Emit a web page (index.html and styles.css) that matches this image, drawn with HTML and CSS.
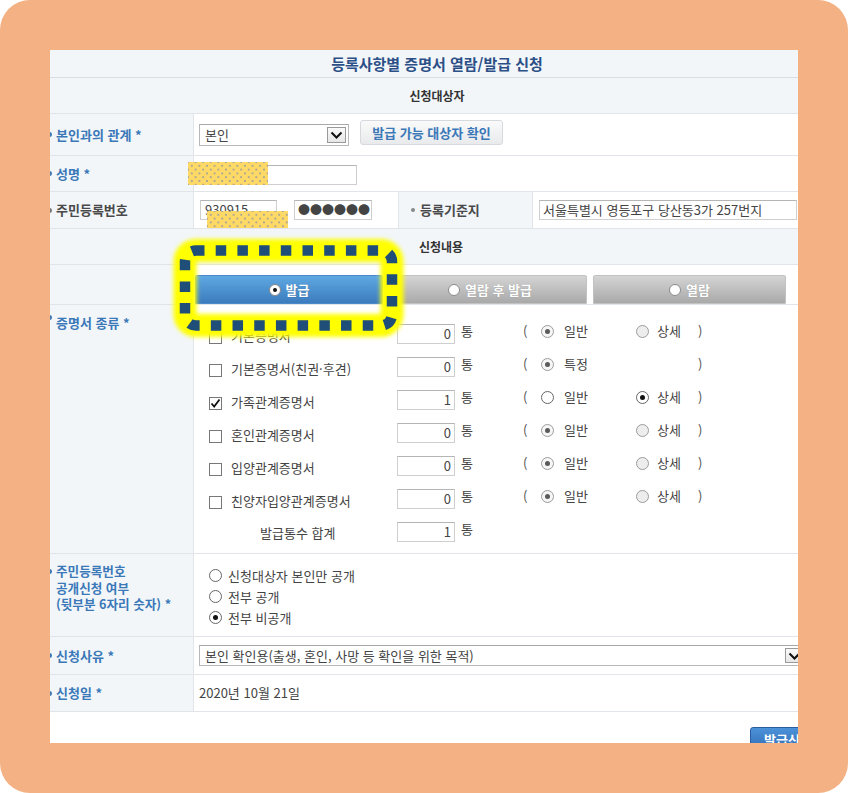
FILE: index.html
```html
<!DOCTYPE html>
<html lang="ko">
<head>
<meta charset="utf-8">
<title>등록사항별 증명서 열람/발급 신청</title>
<link rel="stylesheet" href="styles.css">
</head>
<body>
<div class="frame">
  <div class="panel">
    <div class="sheet">
      <div class="title">등록사항별 증명서 열람/발급 신청</div>
      <div class="sec">신청대상자</div>

      <div class="row r-rel">
        <div class="lab req"><i class="dot"></i>본인과의 관계 *</div>
        <div class="val">
          <div class="sel sel-rel"><span class="sel-text">본인</span><span class="sel-arrow"><svg width="17" height="14" viewBox="0 0 17 14"><polyline points="3.5,4.5 8.5,9.5 13.5,4.5" fill="none" stroke="#111" stroke-width="2"/></svg></span></div>
          <div class="btn-check">발급 가능 대상자 확인</div>
        </div>
      </div>

      <div class="row r-name">
        <div class="lab req"><i class="dot"></i>성명 *</div>
        <div class="val"><div class="inp inp-name"></div></div>
      </div>

      <div class="row r-id">
        <div class="lab plain"><i class="dot"></i>주민등록번호</div>
        <div class="val val-id">
          <div class="inp inp-id1">930915</div>
          <div class="inp inp-id2">●●●●●●</div>
        </div>
        <div class="sublab"><i class="dot sm"></i>등록기준지</div>
        <div class="val"><div class="inp inp-addr">서울특별시 영등포구 당산동3가 257번지</div></div>
      </div>

      <div class="sec sec2">신청내용</div>

      <div class="row r-tabs">
        <div class="lab"></div>
        <div class="val">
          <div class="tab on"><i class="rb on"></i>발급</div>
          <div class="tab off t2"><i class="rb"></i>열람 후 발급</div>
          <div class="tab off t3"><i class="rb"></i>열람</div>
        </div>
      </div>

      <div class="row r-certs">
        <div class="lab req top"><i class="dot"></i>증명서 종류 *</div>
        <div class="val certs">
          <div class="cline">
            <span class="cb"></span><span class="cname">기본증명서</span>
            <span class="inp num">0</span><span class="tong">통</span><span class="par">(</span>
            <i class="radio dis sel"></i><span class="opt1">일반</span>
            <i class="radio dis"></i><span class="opt2">상세</span><span class="par">)</span>
          </div>
          <div class="cline">
            <span class="cb"></span><span class="cname">기본증명서(친권·후견)</span>
            <span class="inp num">0</span><span class="tong">통</span><span class="par">(</span>
            <i class="radio dis sel"></i><span class="opt1">특정</span>
            <i class="radio-gap"></i><span class="opt2"></span><span class="par">)</span>
          </div>
          <div class="cline">
            <span class="cb chk"><svg width="11" height="11" viewBox="0 0 11 11"><polyline points="1.5,5.5 4.2,8.5 9.5,1.5" fill="none" stroke="#111" stroke-width="1.8"/></svg></span><span class="cname">가족관계증명서</span>
            <span class="inp num">1</span><span class="tong">통</span><span class="par">(</span>
            <i class="radio"></i><span class="opt1">일반</span>
            <i class="radio sel"></i><span class="opt2">상세</span><span class="par">)</span>
          </div>
          <div class="cline">
            <span class="cb"></span><span class="cname">혼인관계증명서</span>
            <span class="inp num">0</span><span class="tong">통</span><span class="par">(</span>
            <i class="radio dis sel"></i><span class="opt1">일반</span>
            <i class="radio dis"></i><span class="opt2">상세</span><span class="par">)</span>
          </div>
          <div class="cline">
            <span class="cb"></span><span class="cname">입양관계증명서</span>
            <span class="inp num">0</span><span class="tong">통</span><span class="par">(</span>
            <i class="radio dis sel"></i><span class="opt1">일반</span>
            <i class="radio dis"></i><span class="opt2">상세</span><span class="par">)</span>
          </div>
          <div class="cline">
            <span class="cb"></span><span class="cname">친양자입양관계증명서</span>
            <span class="inp num">0</span><span class="tong">통</span><span class="par">(</span>
            <i class="radio dis sel"></i><span class="opt1">일반</span>
            <i class="radio dis"></i><span class="opt2">상세</span><span class="par">)</span>
          </div>
          <div class="cline total">
            <span class="tname">발급통수 합계</span>
            <span class="inp num">1</span><span class="tong">통</span>
          </div>
        </div>
      </div>

      <div class="row r-disc">
        <div class="lab req top2"><i class="dot"></i><span class="ml"><span class="mline">주민등록번호</span><span class="mline">공개신청 여부</span><span class="mline">(뒷부분 6자리 숫자) *</span></span></div>
        <div class="val disc">
          <div class="dline"><i class="radio"></i>신청대상자 본인만 공개</div>
          <div class="dline"><i class="radio"></i>전부 공개</div>
          <div class="dline"><i class="radio sel"></i>전부 비공개</div>
        </div>
      </div>

      <div class="row r-reason">
        <div class="lab req"><i class="dot"></i>신청사유 *</div>
        <div class="val">
          <div class="sel sel-reason"><span class="sel-text">본인 확인용(출생, 혼인, 사망 등 확인을 위한 목적)</span><span class="sel-arrow"><svg width="17" height="14" viewBox="0 0 17 14"><polyline points="3.5,4.5 8.5,9.5 13.5,4.5" fill="none" stroke="#111" stroke-width="2"/></svg></span></div>
        </div>
      </div>

      <div class="row r-date">
        <div class="lab req"><i class="dot"></i>신청일 *</div>
        <div class="val date">2020년 10월 21일</div>
      </div>

      <div class="foot"><div class="btn-submit">발급신청</div></div>
    </div>
  </div>

  <div class="redact rd1"></div>
  <div class="redact rd2"></div>

  <svg class="hl" width="240" height="112" viewBox="0 0 240 112">
    <defs>
      <filter id="glow" x="-20%" y="-40%" width="140%" height="180%"><feGaussianBlur stdDeviation="2"/></filter>
    </defs>
    <rect x="15" y="20.5" width="207" height="75" rx="11" fill="none" stroke="#FFFF00" stroke-width="23" filter="url(#glow)"/>
    <rect x="15" y="20.5" width="207" height="75" rx="11" fill="none" stroke="#1F4E79" stroke-width="10.5" stroke-dasharray="10.5 11.2" stroke-dashoffset="2"/>
  </svg>
</div>
</body>
</html>
```
FILE: styles.css
```css
html, body {
  margin: 0;
  padding: 0;
  background: #ffffff;
}
body {
  font-family: "Noto Sans CJK KR", "Noto Sans", sans-serif;
  font-size: 13px;
  color: #444;
  line-height: 16px;
}
.frame {
  position: relative;
  width: 848px;
  height: 793px;
  box-sizing: border-box;
  padding: 50px;
  border-radius: 30px;
  background: #F4B183;
}
.panel {
  width: 748px;
  height: 693px;
  overflow: hidden;
  background: #ffffff;
}
.sheet {
  width: 786px;
  margin-left: -6px;
}
.title {
  height: 28px;
  box-sizing: border-box;
  border-bottom: 1px solid #DADEE3;
  background: #F2F6F9;
  display: flex;
  align-items: center;
  justify-content: center;
  font-size: 15px;
  font-weight: 700;
  color: #2C4F87;
}
.sec {
  height: 36px;
  box-sizing: border-box;
  border-bottom: 1px solid #E1E4E8;
  background: #F2F6F9;
  display: flex;
  align-items: center;
  justify-content: center;
  font-size: 12px;
  font-weight: 700;
  color: #333;
}
.sec2 { padding-left: 8px; }

.row {
  display: flex;
  box-sizing: border-box;
  border-bottom: 1px solid #E1E4E8;
}
.r-rel { height: 42px; }
.r-name { height: 36px; }
.r-id { height: 37px; }
.r-tabs { height: 40px; }
.r-certs { height: 249px; }
.r-disc { height: 83px; }
.r-reason { height: 38px; }
.r-date { height: 37px; }

.lab {
  width: 150px;
  flex: none;
  box-sizing: border-box;
  background: #F2F6F9;
  border-right: 1px solid #E1E4E8;
  display: flex;
  align-items: center;
  padding-left: 3px;
  font-weight: 700;
  color: #3A78B8;
  white-space: nowrap;
}
.lab.plain { color: #4A4A4A; }
.lab.top { align-items: flex-start; padding-top: 10px; }
.lab.top2 { align-items: flex-start; padding-top: 9px; }
.lab.top2 .dot { margin-top: 6px; }
.ml { display: flex; flex-direction: column; }
.mline { display: block; height: 16.5px; line-height: 16.5px; font-size: 12.6px; overflow: visible; }
.dot {
  display: inline-block;
  flex: none;
  width: 5px;
  height: 5px;
  border-radius: 50%;
  background: #3A78B8;
  margin-right: 4px;
}
.lab.plain .dot { background: #777; }
.dot.sm { width: 4px; height: 4px; background: #888; margin-right: 5px; }

.val {
  flex: 1;
  display: flex;
  align-items: center;
  padding-left: 6px;
  min-width: 0;
}

/* fake select */
.sel {
  display: flex;
  align-items: center;
  justify-content: space-between;
  box-sizing: border-box;
  height: 22px;
  border: 1px solid #B8B8B8;
  border-top-color: #A8A8A8;
  background: #fff;
  color: #444;
  padding: 0 2px 0 5px;
  white-space: nowrap;
}
.sel-rel { width: 150px; margin-left: -1px; }
.sel-arrow {
  flex: none;
  width: 19px;
  height: 16px;
  box-sizing: border-box;
  border: 1px solid #9A9A9A;
  background: linear-gradient(#FAFAFA, #E6E6E6);
  display: flex;
  align-items: center;
  justify-content: center;
}
.sel-reason { width: 608px; height: 21px; margin-left: -1px; }
.sel-reason .sel-arrow { height: 15px; }

.btn-check {
  margin-left: 11px;
  width: 143px;
  height: 25px;
  box-sizing: border-box;
  border: 1px solid #D6D9DD;
  border-radius: 3px;
  background: linear-gradient(#FAFAFA, #E9EAEC);
  display: flex;
  align-items: center;
  justify-content: center;
  font-weight: 700;
  color: #3A78B8;
  margin-top: -4px;
  white-space: nowrap;
}

/* inputs */
.inp {
  display: flex;
  align-items: center;
  box-sizing: border-box;
  height: 20px;
  border: 1px solid #CFCFCF;
  border-top-color: #B5B5B5;
  background: #fff;
  color: #444;
  padding: 0 4px;
  white-space: nowrap;
  overflow: hidden;
}
.inp-name { width: 157px; margin-top: 2px; }
.val-id { width: 198px; flex: none; }
.inp-id1 { width: 77px; }
.inp-id2 { width: 78px; margin-left: 17px; color: #444; padding-left: 3px; font-size: 12px; }
.sublab {
  width: 135px;
  flex: none;
  box-sizing: border-box;
  background: #F2F6F9;
  border-left: 1px solid #E1E4E8;
  border-right: 1px solid #E1E4E8;
  display: flex;
  align-items: center;
  padding-left: 12px;
  font-weight: 700;
  color: #4A4A4A;
}
.inp-addr { width: 258px; height: 20px; padding-left: 3px; }

/* tabs */
.r-tabs .val { align-items: flex-end; padding-left: 1px; }
.tab {
  height: 29px;
  display: flex;
  align-items: center;
  justify-content: center;
  gap: 5px;
  color: #fff;
  font-weight: 700;
  border-radius: 2px 2px 0 0;
  box-sizing: border-box;
  text-shadow: 0 0 1px rgba(0,0,0,0.25);
}
.tab.on {
  width: 188px;
  background: linear-gradient(#5EA8E2, #3C7CBE);
  border: 1px solid #4A8ACB;
}
.tab.off {
  background: linear-gradient(#D4D4D4, #A9A9A9);
  border: 1px solid #C2C2C2;
}
.tab.t2 { width: 194px; margin-left: 10px; }
.tab.t3 { width: 193px; margin-left: 6px; }
.rb {
  display: inline-block;
  width: 12px;
  height: 12px;
  box-sizing: border-box;
  border-radius: 50%;
  background: #fff;
  border: 1px solid #8A8A8A;
  position: relative;
}
.rb.on::after {
  content: "";
  position: absolute;
  left: 3px;
  top: 3px;
  width: 4px;
  height: 4px;
  border-radius: 50%;
  background: #111;
}

/* certificates */
.certs {
  display: block;
  padding-top: 11px;
  padding-left: 0;
}
.cline {
  height: 33px;
  display: flex;
  align-items: center;
}
.cb {
  flex: none;
  width: 13px;
  height: 13px;
  box-sizing: border-box;
  border: 1px solid #777;
  background: #fff;
  margin-left: 15px;
  margin-top: 9px;
  display: flex;
  align-items: center;
  justify-content: center;
}
.cname {
  flex: none;
  width: 166px;
  margin-left: 9px;
  margin-top: 7px;
  white-space: nowrap;
}
.inp.num {
  flex: none;
  width: 58px;
  height: 20px;
  justify-content: flex-end;
  padding-right: 3px;
  margin-top: 2px;
}
.tong { flex: none; width: 62px; margin-left: 6px; margin-top: -4px; }
.par { flex: none; width: 18px; margin-top: -4px; color: #555; }
.opt1 { flex: none; width: 72px; margin-top: -4px; }
.opt2 { flex: none; width: 41px; margin-top: -4px; }
.radio {
  flex: none;
  display: inline-block;
  width: 13px;
  height: 13px;
  box-sizing: border-box;
  border-radius: 50%;
  border: 1px solid #666;
  background: #fff;
  position: relative;
  margin-right: 10px;
  margin-top: -3px;
}
.radio.dis { border-color: #9C9C9C; background: #EDEDED; }
.radio.dis.sel { background: #F6F6F6; }
.radio.sel::after {
  content: "";
  position: absolute;
  left: 3px;
  top: 3px;
  width: 5px;
  height: 5px;
  border-radius: 50%;
  background: #111;
}
.radio.dis.sel::after { background: #5A5A5A; }
.opt1 + .radio { margin-right: 8px; }
.radio-gap { flex: none; width: 21px; }
.cline.total .tname {
  flex: none;
  width: 137px;
  margin-left: 66px;
  margin-top: 4px;
  color: #444;
}

/* disclose */
.disc {
  display: block;
  padding-top: 11px;
  padding-left: 0;
}
.dline {
  height: 21px;
  display: flex;
  align-items: center;
}
.dline .radio { margin-left: 15px; margin-right: 6px; margin-top: 0; }

.date { padding-left: 5px; }

.foot {
  height: 40px;
  display: flex;
  justify-content: flex-end;
  align-items: flex-start;
  padding-top: 15px;
  padding-right: 8px;
}
.btn-submit {
  width: 72px;
  height: 26px;
  box-sizing: border-box;
  border: 1px solid #2A5E9E;
  border-radius: 3px;
  background: linear-gradient(#4C92D9, #2D69B3);
  color: #fff;
  font-weight: 700;
  font-size: 13px;
  display: flex;
  align-items: center;
  padding-left: 13px;
  white-space: nowrap;
}

/* overlays */
.redact {
  position: absolute;
  background-color: #FFD966;
  background-image:
    radial-gradient(circle, #6E84B5 0.5px, transparent 0.9px),
    radial-gradient(circle, #6E84B5 0.5px, transparent 0.9px);
  background-size: 7.6px 7.6px, 7.6px 7.6px;
  background-position: 0 0, 3.8px 3.8px;
}
.rd1 { left: 188px; top: 162px; width: 80px; height: 23px; }
.rd2 { left: 207px; top: 211px; width: 81px; height: 17px; }
.hl {
  position: absolute;
  left: 170px;
  top: 230px;
  overflow: visible;
}
```
